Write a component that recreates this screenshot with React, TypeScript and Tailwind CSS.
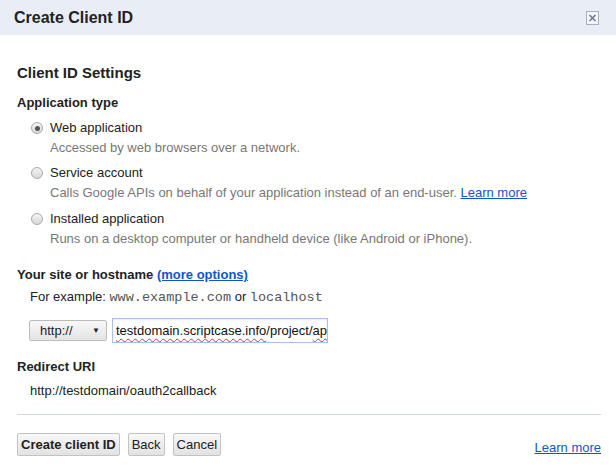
import React from 'react'

const font = { fontFamily: '"Liberation Sans", Arial, sans-serif' }
const mono = { fontFamily: '"Liberation Mono", "Courier New", monospace' }

function Radio({ checked }: { checked?: boolean }) {
  return (
    <span className="mt-[4px] flex h-[12px] w-[12px] shrink-0 items-center justify-center rounded-full border border-[#a9a9a9] bg-gradient-to-b from-[#f4f4f4] to-[#d8d8d8]">
      {checked && <span className="h-[5px] w-[5px] rounded-full bg-[#555]" />}
    </span>
  )
}

function Option({ label, desc, checked, link, className = '' }: { label: string; desc: string; checked?: boolean; link?: string; className?: string }) {
  return (
    <div className={`ml-[14px] flex gap-[7px] ${className}`}>
      <Radio checked={checked} />
      <div>
        <div className="text-[13px] leading-[20px] text-[#222]">{label}</div>
        <div className="text-[13px] leading-[20px] text-[#777]">
          {desc}
          {link && (
            <>
              {' '}
              <a className="text-[#15c] underline">{link}</a>
            </>
          )}
        </div>
      </div>
    </div>
  )
}

function Btn({ children, bold }: { children: React.ReactNode; bold?: boolean }) {
  return (
    <button
      className={`h-[23px] rounded-[2px] border border-[#c3c3c3] bg-gradient-to-b from-[#f8f8f8] to-[#e2e2e2] px-[3px] text-[13px] text-[#222] ${bold ? 'font-bold' : ''}`}
    >
      {children}
    </button>
  )
}

export default function App() {
  return (
    <div className="h-[469px] w-[616px] overflow-hidden bg-white" style={font}>
      {/* Header */}
      <div className="flex h-[35px] items-center justify-between bg-[#e9eef6] pl-[14px] pr-[17px]">
        <h1 className="text-[16px] font-bold text-[#222]">Create Client ID</h1>
        <svg width="13" height="14" viewBox="0 0 13 14">
          <rect x="0.5" y="0.5" width="12" height="13" fill="#f4f6fa" stroke="#a7b1c0" />
          <path d="M3.5 4 L9.5 10 M9.5 4 L3.5 10" stroke="#6b7b93" strokeWidth="1.6" />
        </svg>
      </div>

      <div className="pl-[17px] pr-[15px]">
        <h2 className="mt-[28px] text-[15px] font-bold leading-[20px] text-[#222]">Client ID Settings</h2>
        <h3 className="mt-[10px] text-[13px] font-bold leading-[20px] text-[#222]">Application type</h3>

        <Option className="mt-[5px]" checked label="Web application" desc="Accessed by web browsers over a network." />
        <Option
          className="mt-[5px]"
          label="Service account"
          desc="Calls Google APIs on behalf of your application instead of an end-user."
          link="Learn more"
        />
        <Option
          className="mt-[6px]"
          label="Installed application"
          desc="Runs on a desktop computer or handheld device (like Android or iPhone)."
        />

        <div className="mt-[16px] text-[13px] font-bold leading-[20px] text-[#222]">
          Your site or hostname <a className="text-[#15c] underline">(more options)</a>
        </div>
        <div className="ml-[13px] mt-[2px] text-[13px] leading-[20px] text-[#222]">
          For example:{' '}
          <span className="text-[13.5px] text-[#555]" style={mono}>
            www.example.com
          </span>{' '}
          or{' '}
          <span className="text-[13.5px] text-[#555]" style={mono}>
            localhost
          </span>
        </div>

        <div className="ml-[12px] mt-[10px] flex items-center gap-[5px]">
          <div className="flex h-[21px] w-[78px] items-center justify-between rounded-[2px] border border-[#bdbdbd] bg-gradient-to-b from-[#f8f8f8] to-[#e4e4e4] pl-[10px] pr-[6px] text-[13px] text-[#222]">
            <span>http://</span>
            <span className="text-[8px]">▼</span>
          </div>
          <div className="flex h-[25px] w-[216px] items-center overflow-hidden whitespace-nowrap border border-[#a9c1e6] pl-[3px] text-[13px] text-[#111] shadow-[inset_0_1px_2px_rgba(0,0,0,0.08)]">
            <span className="shrink-0 underline decoration-[#e03030] decoration-wavy decoration-1 underline-offset-[3px]">testdomain.scriptcase.info</span>
            <span className="shrink-0">/project/</span>
            <span className="shrink-0 underline decoration-[#e03030] decoration-wavy decoration-1 underline-offset-[3px]">ap</span>
          </div>
        </div>

        <div className="mt-[14px] text-[13px] font-bold leading-[20px] text-[#222]">Redirect URI</div>
        <div className="ml-[13px] mt-[4px] text-[13px] leading-[20px] text-[#222]">http://testdomain/oauth2callback</div>

        <div className="mt-[13px] h-px w-[584px] bg-[#cfd8e0]" />

        <div className="mt-[17px] flex w-[584px] items-center justify-between">
          <div className="flex gap-[8px]">
            <Btn bold>Create client ID</Btn>
            <Btn>Back</Btn>
            <Btn>Cancel</Btn>
          </div>
          <a className="mt-[6px] text-[13px] text-[#15c] underline">Learn more</a>
        </div>
      </div>
    </div>
  )
}
